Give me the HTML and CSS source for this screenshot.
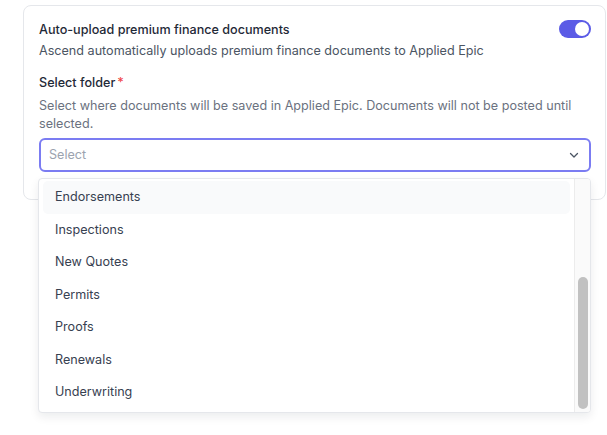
FILE: index.html
```html
<!DOCTYPE html>
<html lang="en">
<head>
<meta charset="utf-8">
<title>Premium finance settings</title>
<link rel="stylesheet" href="styles.css">
</head>
<body>
<main class="page">
<section class="card">
  <div class="setting-row">
    <div class="setting-text">
      <h3 class="setting-title">Auto-upload premium finance documents</h3>
      <p class="setting-desc">Ascend automatically uploads premium finance documents to Applied Epic</p>
    </div>
    <span class="toggle is-on" role="switch" aria-checked="true"><span class="toggle-knob"></span></span>
  </div>

  <div class="field">
    <label class="field-label">Select folder<span class="required">*</span></label>
    <p class="field-help">Select where documents will be saved in Applied Epic. Documents will not be posted until selected.</p>
    <div class="select-wrap">
      <div class="select is-open">
        <span class="select-placeholder">Select</span>
        <svg class="select-chevron" width="12" height="12" viewBox="0 0 12 12" aria-hidden="true">
          <path d="M2.5 4.5 L6 8 L9.5 4.5" fill="none" stroke="#4b5563" stroke-width="1.3" stroke-linecap="round" stroke-linejoin="round"/>
        </svg>
      </div>
      <div class="menu">
        <ul class="menu-list">
          <li class="menu-item is-active">Endorsements</li>
          <li class="menu-item">Inspections</li>
          <li class="menu-item">New Quotes</li>
          <li class="menu-item">Permits</li>
          <li class="menu-item">Proofs</li>
          <li class="menu-item">Renewals</li>
          <li class="menu-item">Underwriting</li>
        </ul>
        <div class="menu-scrollbar"><div class="menu-thumb"></div></div>
      </div>
    </div>
  </div>
</section>
</main>
</body>
</html>
```

FILE: styles.css
```css
* {
  box-sizing: border-box;
}

body {
  margin: 0;
  background: #ffffff;
  font-family: Inter, "Noto Sans", sans-serif;
  font-size: 12.6px;
  line-height: 20px;
  color: #111827;
}

.page {
  min-height: 435px;
  padding-top: 5px;
}

.card {
  margin-left: 23px;
  width: 583px;
  height: 195px;
  border: 1px solid #e5e7eb;
  border-radius: 8px;
  padding: 14px 14px 0 15px;
}

.setting-row {
  display: flex;
  justify-content: space-between;
  align-items: flex-start;
}

.setting-title {
  margin: 0;
  font-size: 12.6px;
  font-weight: 500;
  line-height: 20px;
  color: #1f2937;
}

.setting-desc {
  margin: 1px 0 0;
  color: #4b5563;
}

.toggle {
  margin-top: 0;
  width: 32px;
  height: 18px;
  border-radius: 9px;
  background: #5b5be6;
  display: flex;
  align-items: center;
  justify-content: flex-end;
  padding: 0 2px;
}

.toggle-knob {
  width: 14px;
  height: 14px;
  border-radius: 50%;
  background: #ffffff;
}

.field {
  margin-top: 12px;
}

.field-label {
  display: block;
  font-weight: 500;
  color: #1f2937;
}

.required {
  color: #ef4444;
  margin-left: 2px;
}

.field-help {
  margin: 4px 0 0;
  color: #6b7280;
  line-height: 18px;
}

.select-wrap {
  position: relative;
  margin-top: 5px;
}

.select {
  height: 34px;
  border: 2px solid #7b7cf2;
  border-radius: 6px;
  display: flex;
  align-items: center;
  justify-content: space-between;
  padding: 0 9px 0 8px;
}

.select-placeholder {
  color: #9ca3af;
}

.menu {
  position: absolute;
  left: -1px;
  top: 40px;
  width: 553px;
  height: 235px;
  background: #ffffff;
  border: 1px solid #e5e7eb;
  border-radius: 4px;
  box-shadow: 0 4px 10px rgba(17, 24, 39, 0.08);
  display: flex;
  overflow: hidden;
  z-index: 2;
}

.menu-list {
  flex: 1;
  list-style: none;
  margin: 0;
  padding: 2px 4px;
}

.menu-item {
  height: 32.5px;
  display: flex;
  align-items: center;
  padding-left: 12px;
  border-radius: 5px;
  color: #374151;
}

.menu-item.is-active {
  background: #f9fafb;
}

.menu-scrollbar {
  width: 16px;
  border-left: 1px solid #ececec;
  background: #fafafa;
  display: flex;
  flex-direction: column;
  justify-content: flex-end;
  padding: 0 2px 3px 3px;
}

.menu-thumb {
  height: 132px;
  border-radius: 5px;
  background: #c1c1c1;
}
```
